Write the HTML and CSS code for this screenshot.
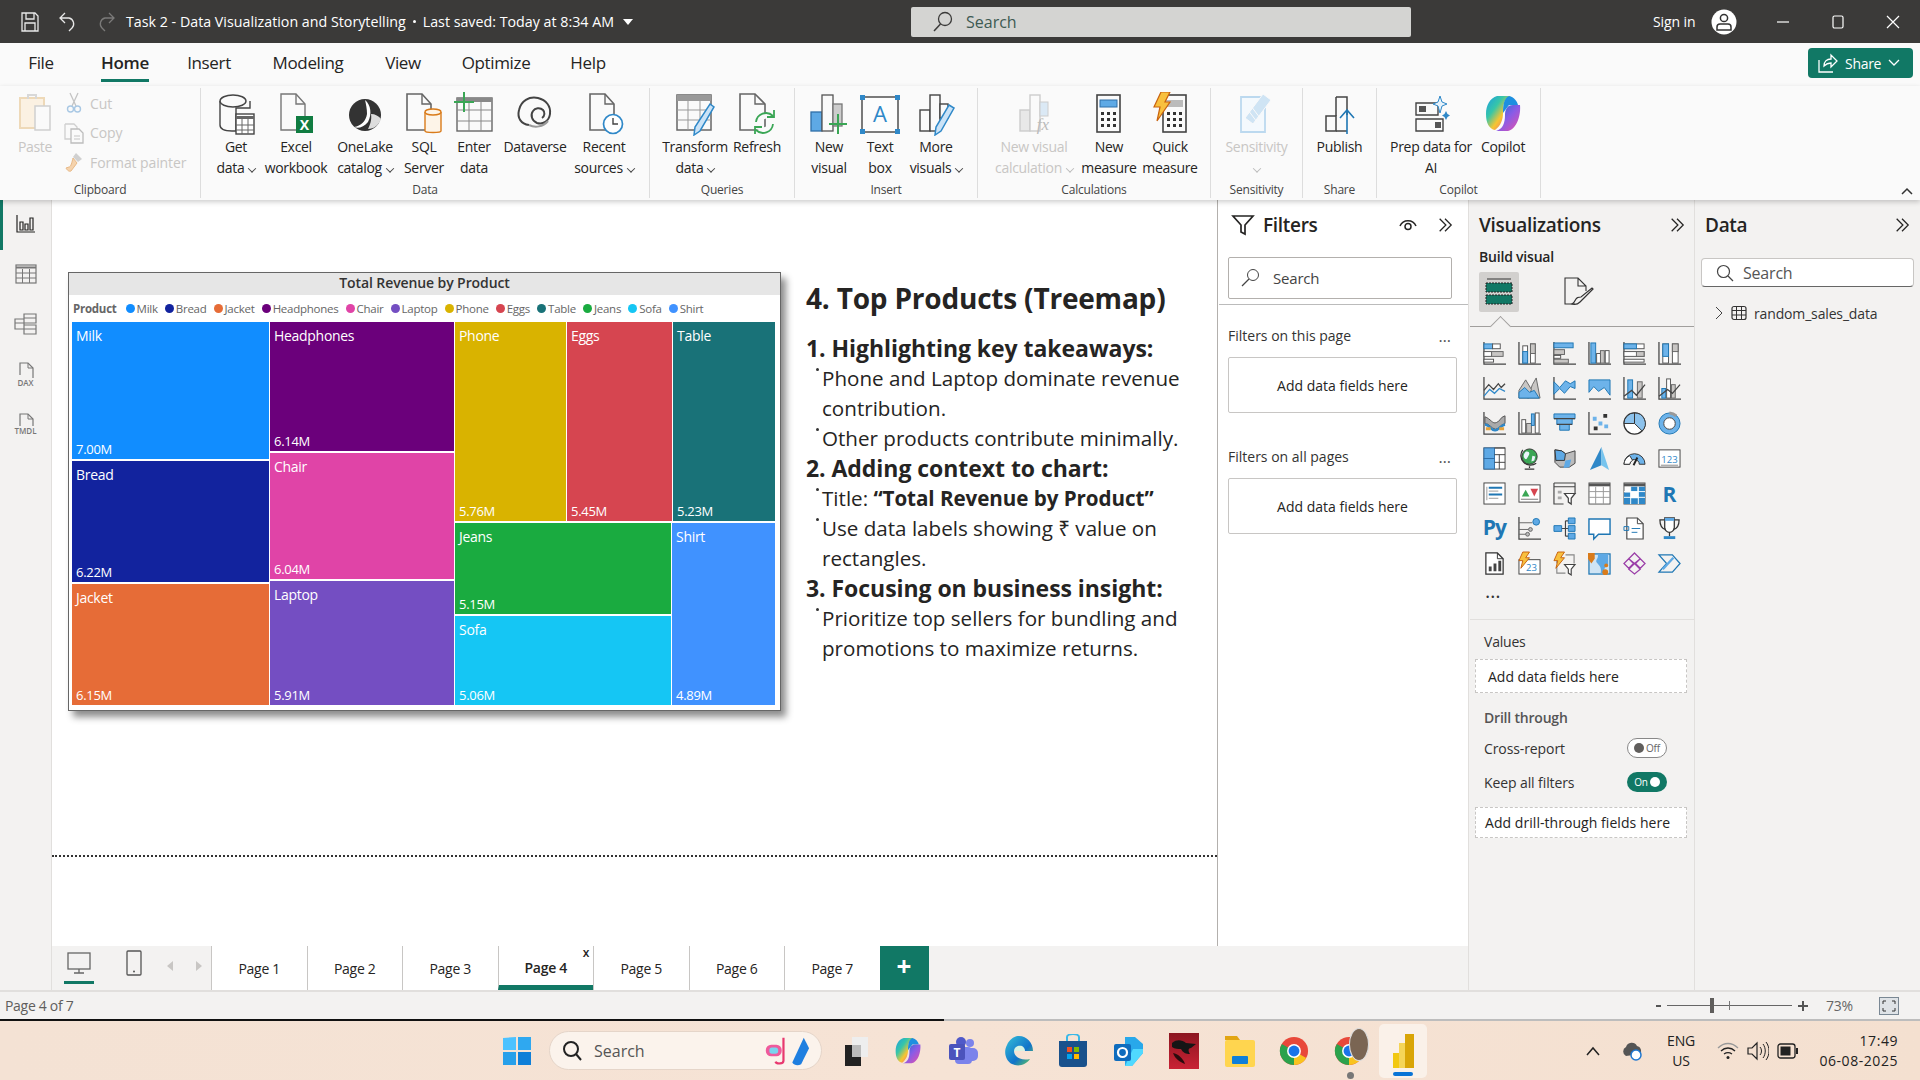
FILE: index.html
```html
<!DOCTYPE html>
<html lang="en">
<head>
<meta charset="utf-8">
<title>Task 2 - Data Visualization and Storytelling</title>
<link rel="stylesheet" href="styles.css">
</head>
<body>
<svg class="defs" aria-hidden="true">
  <defs>
    <linearGradient id="cop" x1="0" y1="0" x2="1" y2="1"><stop offset="0" stop-color="#1b9de2"/><stop offset=".35" stop-color="#37c6a8"/><stop offset=".6" stop-color="#f7c531"/><stop offset="1" stop-color="#ee4c8e"/></linearGradient>
    <linearGradient id="cop2" x1="0" y1="0" x2="1" y2="1"><stop offset="0" stop-color="#1570d6"/><stop offset=".5" stop-color="#8a5ce6"/><stop offset="1" stop-color="#e94fa8"/></linearGradient>
    <linearGradient id="edge" x1="0" y1="0" x2="1" y2="1"><stop offset="0" stop-color="#35c1d9"/><stop offset=".6" stop-color="#1173c9"/><stop offset="1" stop-color="#6bd24f"/></linearGradient>
    <linearGradient id="drag" x1="0" y1="0" x2="0" y2="1"><stop offset="0" stop-color="#8c1620"/><stop offset="1" stop-color="#c92235"/></linearGradient>
    <symbol id="dbl" viewBox="0 0 18 18"><path d="M3 2l7 7-7 7M9 2l7 7-7 7" fill="none" stroke="#252423" stroke-width="1.4"/></symbol>
    <symbol id="chrome" viewBox="0 0 32 32"><circle cx="16" cy="16" r="15" fill="#e8483a"/><path d="M16 16L29 23.5A15 15 0 0 1 16 31z" fill="#f9c31e"/><path d="M16 16L16 31A15 15 0 0 1 3 8.5z" fill="#2ba24c"/><circle cx="16" cy="16" r="7.4" fill="#fff"/><circle cx="16" cy="16" r="5.8" fill="#1a73e8"/></symbol>
  </defs>
</svg>

<header class="titlebar">
  <div class="tb-left">
    <svg class="tb-ic" width="20" height="22" viewBox="0 0 20 22"><path d="M2 2h13l3 3v15H2z M6 2v6h8V2 M5 20v-8h10v8" fill="none" stroke="#e8e8e8" stroke-width="1.3"/></svg>
    <svg class="tb-ic" width="20" height="22" viewBox="0 0 20 22"><path d="M7 2L2 7l5 5M2 7h9a6 6 0 0 1 3 10l-3 3" fill="none" stroke="#e8e8e8" stroke-width="1.3"/></svg>
    <svg class="tb-ic tb-redo" width="20" height="22" viewBox="0 0 20 22"><path d="M13 2l5 5-5 5M18 7H9a6 6 0 0 0-3 10l3 3" fill="none" stroke="#7b7a79" stroke-width="1.3"/></svg>
    <span class="doc-title">Task 2 - Data Visualization and Storytelling</span>
    <span class="doc-dot"></span>
    <span class="doc-title">Last saved: Today at 8:34 AM</span>
    <span class="doc-caret"></span>
  </div>
  <div class="tb-search">
    <svg width="22" height="24" viewBox="0 0 22 24"><circle cx="13" cy="9" r="6.5" fill="none" stroke="#3b3a39" stroke-width="1.3"/><path d="M8.5 14L2 21" stroke="#3b3a39" stroke-width="1.5"/></svg>
    <span>Search</span>
  </div>
  <div class="tb-right">
    <span class="signin">Sign in</span>
    <svg class="avatar" width="26" height="26" viewBox="0 0 26 26"><circle cx="13" cy="13" r="12.5" fill="#fff"/><circle cx="13" cy="9" r="3.6" fill="none" stroke="#333" stroke-width="1.5"/><path d="M6 21v-3a3 3 0 0 1 3-3h8a3 3 0 0 1 3 3v3z" fill="none" stroke="#333" stroke-width="1.5"/></svg>
    <svg class="win-btn" width="14" height="14" viewBox="0 0 14 14"><path d="M1 7h12" stroke="#fff" stroke-width="1.2"/></svg>
    <svg class="win-btn" width="14" height="14" viewBox="0 0 14 14"><rect x="2" y="1" width="10" height="12" rx="1.5" fill="none" stroke="#fff" stroke-width="1.2"/></svg>
    <svg class="win-btn" width="14" height="14" viewBox="0 0 14 14"><path d="M1 1l12 12M13 1L1 13" stroke="#fff" stroke-width="1.2"/></svg>
  </div>
</header>

<nav class="tabsrow">
  <div class="rtabs">
    <span class="rtab t-file">File</span>
    <span class="rtab t-home active">Home</span>
    <span class="rtab t-ins">Insert</span>
    <span class="rtab t-mod">Modeling</span>
    <span class="rtab t-view">View</span>
    <span class="rtab t-opt">Optimize</span>
    <span class="rtab t-help">Help</span>
  </div>
  <button class="share">
    <svg width="22" height="22" viewBox="0 0 22 22"><path d="M3 8v12h14M8 14c0-5 3-7 7-7V3l6 6-6 6v-4c-3 0-5 1-7 3z" fill="none" stroke="#fff" stroke-width="1.3"/></svg>
    <span>Share</span>
    <svg width="12" height="8" viewBox="0 0 12 8"><path d="M1 1l5 5 5-5" fill="none" stroke="#fff" stroke-width="1.3"/></svg>
  </button>
</nav>

<section class="ribbon">
  <div class="rgroup g-clip">
    <div class="rbody clipbody">
      <div class="rbtn dis paste">
        <div class="ric"><svg width="40" height="40" viewBox="0 0 40 40"><path d="M5 6h24v30H5z" fill="#fbf1e2" stroke="#eed9b8" stroke-width="2"/><path d="M13 7V3h8v4" fill="none" stroke="#d8d8d8" stroke-width="2"/><rect x="20" y="14" width="15" height="24" fill="#fafafa" stroke="#cfcfcf" stroke-width="1.5"/></svg></div>
        <div class="rtxt">Paste</div>
      </div>
      <div class="clipcol">
        <div class="clipitem"><svg width="20" height="22" viewBox="-2 0 20 22"><path d="M4 1l6 13M12 1L6 14" stroke="#c4c4c4" stroke-width="1.3"/><circle cx="4.5" cy="17" r="3" fill="none" stroke="#a9c8e4" stroke-width="1.4"/><circle cx="11.5" cy="17" r="3" fill="none" stroke="#a9c8e4" stroke-width="1.4"/></svg><span>Cut</span></div>
        <div class="clipitem"><svg width="20" height="22" viewBox="0 0 20 22"><path d="M1 2h9l3 3v3M1 2v15h6" fill="none" stroke="#cfcfcf" stroke-width="1.3"/><path d="M7 7h8l4 4v10H7z" fill="#fafafa" stroke="#bdbdbd" stroke-width="1.3"/><path d="M10 14h6M10 17h6" stroke="#c4c4c4"/></svg><span>Copy</span></div>
        <div class="clipitem"><svg width="20" height="22" viewBox="0 0 20 22"><path d="M12 2l6 6-4 3-5-5z" fill="#d0d0d0"/><path d="M9 7l4 5-6 8c-2 1-4-1-5-3l3-1c2 0 3-5 4-9z" fill="#f5d3ad" stroke="#e8b987"/></svg><span>Format painter</span></div>
      </div>
    </div>
    <div class="rlabel">Clipboard</div>
  </div>

  <div class="rgroup g-data">
    <div class="rbody">
      <div class="rbtn"><div class="ric"><svg width="40" height="44" viewBox="0 0 40 44"><path d="M4 9v24c0 4 5 6 12 6h4V16h14V9" fill="#fafafa" stroke="#444" stroke-width="1.4"/><ellipse cx="17" cy="9" rx="13" ry="6" fill="#fafafa" stroke="#444" stroke-width="1.4"/><rect x="20" y="22" width="18" height="20" fill="#fff" stroke="#444" stroke-width="1.4"/><path d="M20 24h18v3H20z" fill="#666"/><path d="M20 33h18M20 38h18M26 27v15M32 27v15" stroke="#666"/></svg></div><div class="rtxt">Get<br>data<i class="chev"></i></div></div>
      <div class="rbtn"><div class="ric"><svg width="40" height="44" viewBox="0 0 40 44"><path d="M5 2h15l9 10v26H5z" fill="#fafafa" stroke="#777" stroke-width="1.4"/><path d="M20 2v10h9" fill="none" stroke="#777" stroke-width="1.4"/><rect x="20" y="24" width="17" height="17" fill="#107c41"/><text x="28.5" y="37.5" class="xl">X</text></svg></div><div class="rtxt">Excel<br>workbook</div></div>
      <div class="rbtn"><div class="ric"><svg width="40" height="44" viewBox="0 0 40 44"><circle cx="20" cy="23" r="16" fill="#333"/><path d="M20 8c6 5 7 14 3 22-4 5-10 7-14 5 7-1 12-6 13-13 0-5-1-10-2-14z" fill="#fff"/><path d="M26 22c4 0 8 2 10 5-2 6-7 10-13 10 2-4 4-9 3-15z" fill="#ddd"/></svg></div><div class="rtxt">OneLake<br>catalog<i class="chev"></i></div></div>
      <div class="rbtn"><div class="ric"><svg width="40" height="44" viewBox="0 0 40 44"><path d="M3 2h15l9 10v26H3z" fill="#fafafa" stroke="#666" stroke-width="1.6"/><path d="M18 2v10h9" fill="none" stroke="#666" stroke-width="1.4"/><path d="M21 20v19c0 2 16 2 16 0V20" fill="#fdf4e8" stroke="#d97b1a" stroke-width="1.4"/><ellipse cx="29" cy="20" rx="8" ry="3" fill="#fdf4e8" stroke="#d97b1a" stroke-width="1.4"/></svg></div><div class="rtxt">SQL<br>Server</div></div>
      <div class="rbtn"><div class="ric"><svg width="40" height="44" viewBox="0 0 40 44"><rect x="3" y="6" width="35" height="33" fill="#fafafa" stroke="#666" stroke-width="1.4"/><path d="M3 6h35v4H3z" fill="#888"/><path d="M3 18h35M3 29h35M15 10v29M27 10v29" stroke="#888"/><path d="M10 0v20M0 10h20" stroke="#3aa655" stroke-width="2"/></svg></div><div class="rtxt">Enter<br>data</div></div>
      <div class="rbtn"><div class="ric"><svg width="40" height="40" viewBox="0 0 40 40"><path d="M14 33C6 32 2 26 4 18 6 9 14 4 23 6c8 2 13 8 12 16-1 7-7 11-13 9-5-2-7-8-4-12 2-3 7-4 10-1 2 2 2 6-1 8" fill="none" stroke="#444" stroke-width="2"/><path d="M14 33c6 3 14 2 19-4" fill="none" stroke="#999" stroke-width="2"/></svg></div><div class="rtxt">Dataverse</div></div>
      <div class="rbtn"><div class="ric"><svg width="40" height="44" viewBox="0 0 40 44"><path d="M6 2h15l9 10v26H6z" fill="#fafafa" stroke="#666" stroke-width="1.6"/><path d="M21 2v10h9" fill="none" stroke="#666" stroke-width="1.4"/><circle cx="29" cy="32" r="9.5" fill="#fff" stroke="#2f88c8" stroke-width="1.7"/><path d="M29 26v6h5" fill="none" stroke="#444" stroke-width="1.4"/></svg></div><div class="rtxt">Recent<br>sources<i class="chev"></i></div></div>
    </div>
    <div class="rlabel">Data</div>
  </div>

  <div class="rgroup g-query">
    <div class="rbody">
      <div class="rbtn"><div class="ric"><svg width="42" height="44" viewBox="0 0 42 44"><rect x="3" y="3" width="34" height="35" fill="#fafafa" stroke="#666" stroke-width="1.5"/><path d="M3 3h34v6H3z" fill="#999"/><path d="M3 18h34M3 28h34M14 9v29M26 9v29" stroke="#999"/><path d="M36 12l4 3-14 24-6 4 1-8z" fill="#cbe3f7" stroke="#2f88c8" stroke-width="1.5"/></svg></div><div class="rtxt">Transform<br>data<i class="chev"></i></div></div>
      <div class="rbtn"><div class="ric"><svg width="40" height="44" viewBox="0 0 40 44"><path d="M3 2h15l10 10v26H3z" fill="#fafafa" stroke="#666" stroke-width="1.6"/><path d="M18 2v10h10" fill="none" stroke="#666" stroke-width="1.4"/><path d="M19 30a10 10 0 0 1 17-6M36 32a10 10 0 0 1-17 6" fill="#fafafa" stroke="#3aa655" stroke-width="1.8"/><path d="M37 18v7h-7M18 42v-7h7" fill="none" stroke="#3aa655" stroke-width="1.8"/></svg></div><div class="rtxt">Refresh</div></div>
    </div>
    <div class="rlabel">Queries</div>
  </div>

  <div class="rgroup g-insert">
    <div class="rbody">
      <div class="rbtn"><div class="ric"><svg width="40" height="44" viewBox="0 0 40 44"><rect x="2" y="20" width="11" height="19" fill="#5ea9e5" stroke="#2f6fa8" stroke-width="1.3"/><rect x="13" y="3" width="11" height="36" fill="#fafafa" stroke="#555" stroke-width="1.3"/><rect x="24" y="12" width="9" height="22" fill="#ccc" stroke="#777" stroke-width="1.3"/><path d="M29 22v20M20 32h18" stroke="#3aa655" stroke-width="2"/></svg></div><div class="rtxt">New<br>visual</div></div>
      <div class="rbtn"><div class="ric"><svg width="40" height="44" viewBox="0 0 40 44"><rect x="2" y="5" width="36" height="35" fill="#fdfdfd" stroke="#444" stroke-width="1.4"/><g fill="#2f88c8"><rect x="0" y="3" width="5" height="5"/><rect x="35" y="3" width="5" height="5"/><rect x="0" y="37" width="5" height="5"/><rect x="35" y="37" width="5" height="5"/></g><text x="20" y="30" class="tbA">A</text></svg></div><div class="rtxt">Text<br>box</div></div>
      <div class="rbtn"><div class="ric"><svg width="40" height="44" viewBox="0 0 40 44"><rect x="4" y="18" width="10" height="21" fill="#fafafa" stroke="#444" stroke-width="1.4"/><rect x="14" y="3" width="10" height="36" fill="#fafafa" stroke="#444" stroke-width="1.4"/><rect x="24" y="12" width="8" height="14" fill="#fafafa" stroke="#444" stroke-width="1.4"/><path d="M33 13l5 3-13 23-6 4 1-8z" fill="#cbe3f7" stroke="#2f88c8" stroke-width="1.5"/></svg></div><div class="rtxt">More<br>visuals<i class="chev"></i></div></div>
    </div>
    <div class="rlabel">Insert</div>
  </div>

  <div class="rgroup g-calc">
    <div class="rbody">
      <div class="rbtn dis"><div class="ric"><svg width="40" height="44" viewBox="0 0 40 44"><rect x="6" y="18" width="10" height="21" fill="#e8e8e8" stroke="#ccc" stroke-width="1.4"/><rect x="16" y="3" width="10" height="36" fill="#fafafa" stroke="#ccc" stroke-width="1.4"/><rect x="26" y="10" width="8" height="14" fill="#dbe9f5" stroke="#ccc"/><text x="29" y="38" class="fx">fx</text></svg></div><div class="rtxt">New visual<br>calculation<i class="chev"></i></div></div>
      <div class="rbtn"><div class="ric"><svg width="40" height="44" viewBox="0 0 40 44"><rect x="8" y="3" width="23" height="37" fill="#fafafa" stroke="#444" stroke-width="1.6"/><rect x="11" y="8" width="17" height="7" fill="#5ea9e5" stroke="#2f6fa8"/><path d="M12 20h3v3h-3zM18 20h3v3h-3zM24 20h3v3h-3zM12 26h3v3h-3zM18 26h3v3h-3zM24 26h3v3h-3zM12 32h3v3h-3zM18 32h3v3h-3zM24 32h3v3h-3z" fill="#333"/></svg></div><div class="rtxt">New<br>measure</div></div>
      <div class="rbtn"><div class="ric"><svg width="40" height="44" viewBox="0 0 40 44"><rect x="13" y="3" width="23" height="37" fill="#fafafa" stroke="#444" stroke-width="1.6"/><rect x="16" y="8" width="17" height="7" fill="#bbb"/><path d="M17 20h3v3h-3zM23 20h3v3h-3zM29 20h3v3h-3zM17 26h3v3h-3zM23 26h3v3h-3zM29 26h3v3h-3zM17 32h3v3h-3zM23 32h3v3h-3zM29 32h3v3h-3z" fill="#333"/><path d="M11 0h9l-5 10h5L7 29l3-14H4z" fill="#f8c03e" stroke="#c9620f" stroke-width="1.2"/></svg></div><div class="rtxt">Quick<br>measure</div></div>
    </div>
    <div class="rlabel">Calculations</div>
  </div>

  <div class="rgroup g-sens">
    <div class="rbody">
      <div class="rbtn dis"><div class="ric"><svg width="40" height="44" viewBox="0 0 40 44"><path d="M4 5h24v35H4z" fill="#f4f9fd" stroke="#bcd9ef" stroke-width="1.8"/><path d="M26 2l8 6-18 24-8-6z" fill="#cfe4f4" stroke="#fafafa"/><path d="M11 18l9 12M14 14l9 12" stroke="#fafafa"/></svg></div><div class="rtxt">Sensitivity<br><i class="chev solo"></i></div></div>
    </div>
    <div class="rlabel">Sensitivity</div>
  </div>

  <div class="rgroup g-share">
    <div class="rbody">
      <div class="rbtn"><div class="ric"><svg width="40" height="44" viewBox="0 0 40 44"><path d="M6 24h10v15H6z M16 5h11v18" fill="#fafafa" stroke="#444" stroke-width="1.5"/><path d="M16 24V5M16 39h11" fill="none" stroke="#444" stroke-width="1.5"/><path d="M27 42V19M20 26l7-8 7 8" fill="none" stroke="#1f77b4" stroke-width="1.6"/></svg></div><div class="rtxt">Publish</div></div>
    </div>
    <div class="rlabel">Share</div>
  </div>

  <div class="rgroup g-cop">
    <div class="rbody">
      <div class="rbtn"><div class="ric"><svg width="40" height="44" viewBox="0 0 40 44"><path d="M5 11h22v12H5z M5 27h27v12H5z" fill="#fafafa" stroke="#444" stroke-width="1.4"/><rect x="8" y="14" width="7" height="6" fill="#555"/><rect x="24" y="30" width="6" height="6" fill="#555"/><path d="M29 4l2 6 5 2-5 2-2 7-2-7-5-2 5-2z" fill="#e6f2fb" stroke="#2f88c8"/><path d="M35 19l1.5 3 2.500 1.500-2.500 1.500-1.500 3-1.500-3-2.500-1.500 2.500-1.500z" fill="#2f88c8"/></svg></div><div class="rtxt">Prep data for<br>AI</div></div>
      <div class="rbtn"><div class="ric"><svg width="40" height="44" viewBox="0 0 40 44"><path d="M14 4h14c-7 2-8 9-8 17 0 6-2 13-8 17-6-1-9-7-9-16C3 13 7 6 14 4z" fill="url(#cop)"/><path d="M26 4c5 1 8 5 9 9H26l-6 8c0-8 1-15 6-17z" fill="#1d8fe0"/><path d="M37 13c1 10-3 24-12 26H13c7-2 9-8 9-16 0-5 2-10 8-10z" fill="url(#cop2)"/></svg></div><div class="rtxt">Copilot</div></div>
    </div>
    <div class="rlabel">Copilot</div>
  </div>
  <svg class="collapse" width="12" height="8" viewBox="0 0 12 8"><path d="M1 7l5-5 5 5" fill="none" stroke="#333" stroke-width="1.5"/></svg>
</section>

<main class="workspace">
  <aside class="rail">
    <div class="rail-ic on"><svg width="20" height="20" viewBox="0 0 20 20"><path d="M1 1v17h18" fill="none" stroke="#252423" stroke-width="1.2"/><path d="M4 8h3v8H4zM9 10h3v6H9zM14 4h3v12h-3z" fill="none" stroke="#252423" stroke-width="1.2"/></svg></div>
    <div class="rail-ic"><svg width="22" height="20" viewBox="0 0 22 20"><rect x="1" y="1" width="20" height="18" fill="none" stroke="#777" stroke-width="1.2"/><path d="M1 3.500h20" stroke="#777" stroke-width="2"/><path d="M1 9h20M1 14h20M7.500 5v14M14.500 5v14" stroke="#777"/></svg></div>
    <div class="rail-ic"><svg width="24" height="24" viewBox="0 0 24 24"><path d="M10 2h12v9H10zM10 13h12v9H10zM1 7h9v10H1z" fill="none" stroke="#777" stroke-width="1.2"/><path d="M10 6h12M10 17h12M1 11h9" stroke="#777"/></svg></div>
    <div class="rail-ic col"><svg width="22" height="16" viewBox="0 0 22 16"><path d="M5 13V1h8l5 5v10" fill="none" stroke="#777" stroke-width="1.2"/><path d="M13 1v5h5" fill="none" stroke="#777"/></svg><span>DAX</span></div>
    <div class="rail-ic col"><svg width="22" height="13" viewBox="0 0 22 13"><path d="M5 13V1h8l5 5v7" fill="none" stroke="#777" stroke-width="1.2"/><path d="M13 1v5h5" fill="none" stroke="#777"/></svg><span>TMDL</span></div>
  </aside>

  <div class="center">
    <div class="stage">
      <div class="canvas-wrap">
        <div class="page">
          <article class="visual">
            <div class="v-title">Total Revenue by Product</div>
            <div class="legend">
              <b>Product</b>
              <span class="lg"><i class="c-milk"></i>Milk</span>
              <span class="lg"><i class="c-bread"></i>Bread</span>
              <span class="lg"><i class="c-jacket"></i>Jacket</span>
              <span class="lg"><i class="c-head"></i>Headphones</span>
              <span class="lg"><i class="c-chair"></i>Chair</span>
              <span class="lg"><i class="c-laptop"></i>Laptop</span>
              <span class="lg"><i class="c-phone"></i>Phone</span>
              <span class="lg"><i class="c-eggs"></i>Eggs</span>
              <span class="lg"><i class="c-table"></i>Table</span>
              <span class="lg"><i class="c-jeans"></i>Jeans</span>
              <span class="lg"><i class="c-sofa"></i>Sofa</span>
              <span class="lg"><i class="c-shirt"></i>Shirt</span>
            </div>
            <div class="treemap">
              <div class="tm-col w1">
                <div class="cell c-milk h-milk"><span>Milk</span><small>7.00M</small></div>
                <div class="cell c-bread h-bread"><span>Bread</span><small>6.22M</small></div>
                <div class="cell c-jacket h-jacket"><span>Jacket</span><small>6.15M</small></div>
              </div>
              <div class="tm-col w2">
                <div class="cell c-head h-head"><span>Headphones</span><small>6.14M</small></div>
                <div class="cell c-chair h-chair"><span>Chair</span><small>6.04M</small></div>
                <div class="cell c-laptop h-laptop"><span>Laptop</span><small>5.91M</small></div>
              </div>
              <div class="tm-col w3">
                <div class="tm-row top">
                  <div class="cell c-phone w-phone"><span>Phone</span><small>5.76M</small></div>
                  <div class="cell c-eggs w-eggs"><span>Eggs</span><small>5.45M</small></div>
                  <div class="cell c-table w-table"><span>Table</span><small>5.23M</small></div>
                </div>
                <div class="tm-row bottom">
                  <div class="tm-col w-jeans">
                    <div class="cell c-jeans h-jeans"><span>Jeans</span><small>5.15M</small></div>
                    <div class="cell c-sofa h-sofa"><span>Sofa</span><small>5.06M</small></div>
                  </div>
                  <div class="cell c-shirt w-shirt"><span>Shirt</span><small>4.89M</small></div>
                </div>
              </div>
            </div>
          </article>
          <article class="notes">
            <h1>4. Top Products (Treemap)</h1>
            <h2>1. Highlighting key takeaways:</h2>
            <ul>
              <li>Phone and Laptop dominate revenue contribution.</li>
              <li>Other products contribute minimally.</li>
            </ul>
            <h2>2. Adding context to chart:</h2>
            <ul>
              <li>Title: <b>“Total Revenue by Product”</b></li>
              <li>Use data labels showing ₹ value on rectangles.</li>
            </ul>
            <h2>3. Focusing on business insight:</h2>
            <ul>
              <li>Prioritize top sellers for bundling and promotions to maximize returns.</li>
            </ul>
          </article>
        </div>
      </div>
      <aside class="filters">
        <div class="f-head">
          <svg width="24" height="22" viewBox="0 0 24 22"><path d="M2 2h20l-8 9v9l-4-2v-7z" fill="none" stroke="#252423" stroke-width="1.7"/></svg>
          <span class="pane-title">Filters</span>
          <svg class="eye" width="18" height="12" viewBox="0 0 18 12"><path d="M1 7c3-7 13-7 16 0" fill="none" stroke="#252423" stroke-width="1.5"/><circle cx="9" cy="7.500" r="3" fill="none" stroke="#252423" stroke-width="1.5"/></svg>
          <svg class="dbl" width="16" height="16"><use href="#dbl"/></svg>
        </div>
        <div class="f-search">
          <svg width="20" height="20" viewBox="0 0 20 20"><circle cx="12" cy="7" r="5.500" fill="none" stroke="#444"/><path d="M8 11l-7 7" stroke="#444" stroke-width="1.200"/></svg>
          <span>Search</span>
        </div>
        <div class="f-rule"></div>
        <div class="f-sec"><span>Filters on this page</span><em>…</em></div>
        <div class="f-box">Add data fields here</div>
        <div class="f-sec s2"><span>Filters on all pages</span><em>…</em></div>
        <div class="f-box">Add data fields here</div>
      </aside>
    </div>
    <div class="pagebar">
      <div class="devices">
        <div class="dev on"><svg width="24" height="24" viewBox="0 0 24 24"><rect x="1" y="2" width="22" height="16" fill="none" stroke="#666" stroke-width="1.300"/><path d="M12 18v4M7 22h10" stroke="#666" stroke-width="1.300"/></svg></div>
        <div class="dev"><svg width="16" height="26" viewBox="0 0 16 26"><rect x="1" y="1" width="14" height="24" rx="1" fill="none" stroke="#555" stroke-width="1.300"/><circle cx="8" cy="21.500" r="1" fill="#555"/></svg></div>
        <span class="arr l"></span>
        <span class="arr r"></span>
      </div>
      <div class="ptab">Page 1</div>
      <div class="ptab">Page 2</div>
      <div class="ptab">Page 3</div>
      <div class="ptab cur">Page 4<span class="px">x</span></div>
      <div class="ptab">Page 5</div>
      <div class="ptab">Page 6</div>
      <div class="ptab">Page 7</div>
      <div class="padd">+</div>
    </div>
  </div>

  <aside class="viz">
    <div class="v-head"><span class="pane-title">Visualizations</span><svg class="dbl" width="16" height="16"><use href="#dbl"/></svg></div>
    <div class="v-sub">Build visual</div>
    <div class="v-modes">
      <div class="mode sel"><svg width="32" height="32" viewBox="0 0 32 32"><path d="M4 3h24" stroke="#333"/><rect x="3" y="7" width="26" height="9" fill="#117865" stroke="#222" stroke-dasharray="2 1"/><rect x="3" y="19" width="26" height="9" fill="#117865" stroke="#222" stroke-dasharray="2 1"/></svg></div>
      <div class="mode"><svg width="32" height="32" viewBox="0 0 32 32"><path d="M12 28H2V2h13l8 8v5M15 2v8h8" fill="none" stroke="#333" stroke-width="1.100"/><path d="M30 13L17 26c-2 2-5 3-8 2 2-1 3-3 4-5s3-2 5-2l11-9z" fill="none" stroke="#333" stroke-width="1.200"/></svg></div>
    </div>
    <div class="v-notch"></div>
    <div class="v-grid">
      <svg class="vi" viewBox="0 0 24 24"><path class="k" d="M1 0v23h23"/><rect class="b" x="1" y="2" width="9" height="5"/><rect class="n" x="10" y="2" width="8" height="5"/><rect class="n" x="1" y="10" width="8" height="5"/><rect class="g" x="9" y="10" width="12" height="5"/><rect class="n" x="1" y="18" width="10" height="3"/></svg>
      <svg class="vi" viewBox="0 0 24 24"><path class="k" d="M1 0v23h23"/><rect class="n" x="5" y="4" width="5" height="18"/><rect class="b" x="5" y="10" width="5" height="12"/><rect class="n" x="13" y="2" width="5" height="20"/><rect class="g" x="13" y="2" width="5" height="10"/></svg>
      <svg class="vi" viewBox="0 0 24 24"><path class="k" d="M1 0v23h23"/><rect class="b" x="1" y="1" width="20" height="5"/><rect class="g" x="1" y="8" width="11" height="5"/><rect class="n" x="1" y="14" width="7" height="3"/><rect class="g" x="1" y="18" width="15" height="4"/></svg>
      <svg class="vi" viewBox="0 0 24 24"><path class="k" d="M1 0v23h23"/><rect class="b" x="3" y="1" width="5" height="21"/><rect class="n" x="9" y="12" width="4" height="10"/><rect class="g" x="13" y="9" width="4" height="13"/><rect class="n" x="18" y="9" width="4" height="13"/></svg>
      <svg class="vi" viewBox="0 0 24 24"><path class="k" d="M1 0v23h23"/><rect class="n" x="1" y="2" width="21" height="5"/><rect class="b" x="1" y="2" width="13" height="5"/><rect class="n" x="1" y="10" width="21" height="5"/><rect class="g" x="14" y="10" width="8" height="5"/><rect class="n" x="1" y="18" width="21" height="3"/></svg>
      <svg class="vi" viewBox="0 0 24 24"><path class="k" d="M1 0v23h23"/><rect class="n" x="5" y="2" width="6" height="20"/><rect class="b" x="5" y="2" width="6" height="13"/><rect class="n" x="15" y="2" width="6" height="20"/><rect class="g" x="15" y="2" width="6" height="8"/></svg>

      <svg class="vi" viewBox="0 0 24 24"><path class="k" d="M1 0v23h23"/><path class="k" d="M1 14l5-6 5 5 5-6 3 4 4-4"/><path class="bl" d="M1 20l6-7 5 4 5-5 6 3"/></svg>
      <svg class="vi" viewBox="0 0 24 24"><path class="g" d="M10 22l5-14 4-7 4 21z"/><path class="g" d="M1 22V14L8 3l6 10-3 9z"/><path class="b" d="M1 22v-6l6-5 5 5 5-2 5 8z"/></svg>
      <svg class="vi" viewBox="0 0 24 24"><path class="k" d="M1 0v23h23"/><path class="b" d="M1 5l6 6 6-7 5 3 5-3v8l-5-2-6 7-5-5-6 6z"/></svg>
      <svg class="vi" viewBox="0 0 24 24"><path class="k" d="M1 23h23"/><path class="b" d="M1 3h22v16l-6-8-6 4-5-5-5 6z"/></svg>
      <svg class="vi" viewBox="0 0 24 24"><path class="k" d="M1 0v23h23"/><rect class="b" x="5" y="3" width="5" height="19"/><rect class="g" x="15" y="5" width="5" height="17"/><path class="k" d="M1 20l8-6 5 5 9-11"/></svg>
      <svg class="vi" viewBox="0 0 24 24"><path class="k" d="M1 0v23h23"/><rect class="b" x="4" y="12" width="4" height="10"/><rect class="n" x="9" y="2" width="4" height="20"/><rect class="g" x="14" y="8" width="4" height="14"/><path class="k" d="M1 20l9-7 5 4 8-9"/></svg>

      <svg class="vi" viewBox="0 0 24 24"><path class="k" d="M1 0v23h23"/><path d="M2 5c6 2 8 8 12 6 4-1 4-6 9-7v8c-5 1-6 6-10 6-5-1-6-6-11-6z" fill="#aaa" stroke="#555"/><path d="M2 13c5 0 6 7 11 6 4 0 5-5 10-6" fill="none" stroke="#2f88c8" stroke-width="2.500"/><path d="M3 16h5v3H3zM17 16h5v3h-5z" fill="#e6a23c"/></svg>
      <svg class="vi" viewBox="0 0 24 24"><path class="k" d="M1 0v23h23"/><rect class="n" x="4" y="8" width="4" height="14"/><rect class="g" x="9" y="12" width="5" height="10"/><rect class="b" x="14" y="2" width="3" height="12"/><rect class="n" x="18" y="1" width="4" height="21"/></svg>
      <svg class="vi" viewBox="0 0 24 24"><path class="b" d="M1 2h22v5h-3v6h-3v6H7v-6H4V7H1z"/><path class="k" d="M1 7h22M4 13h16"/></svg>
      <svg class="vi" viewBox="0 0 24 24"><path class="k" d="M1 0v23h23"/><path d="M5 5h4v4H5z M11 10h4v4h-4z M17 13h4v4h-4z" fill="#6db3ea"/><path d="M16 2h4v4h-4zM6 15h4v4H6z" fill="#333"/></svg>
      <svg class="vi" viewBox="0 0 24 24"><circle cx="12" cy="12" r="11" fill="#fff" stroke="#333" stroke-width="1.300"/><path d="M12 12V1a11 11 0 0 1 8 18.800z" fill="#8cc2ec" stroke="#333"/><path d="M12 12H1a11 11 0 0 1 11-11z" fill="#8cc2ec" stroke="#333"/></svg>
      <svg class="vi" viewBox="0 0 24 24"><circle cx="12" cy="12" r="8.500" fill="none" stroke="#6db3ea" stroke-width="5"/><circle cx="12" cy="12" r="11" fill="none" stroke="#1f77b4"/><circle cx="12" cy="12" r="6" fill="#fff" stroke="#444"/><path d="M12 1a11 11 0 0 1 7 3" stroke="#999" stroke-width="3" fill="none"/></svg>

      <svg class="vi" viewBox="0 0 24 24"><rect x="1" y="1" width="22" height="22" fill="#fff" stroke="#444"/><rect x="1" y="1" width="11" height="11" fill="#5ea9e5" stroke="#2f6fa8"/><rect x="1" y="12" width="11" height="11" fill="#5ea9e5" stroke="#2f6fa8"/><path d="M12 1h11M12 8h11M17 8v15M12 16h11" stroke="#444" fill="none"/></svg>
      <svg class="vi" viewBox="0 0 24 24"><circle cx="12" cy="10" r="8" fill="#3aa655" stroke="#333"/><path d="M8 5c3-1 5 1 3 4s-2 5-4 3-1-5 1-7zM15 9l3 1-1 4-3 1z" fill="#eaf4fb"/><path d="M5 3a10 10 0 0 0 14 14M12 20v2M7 23h10" fill="none" stroke="#333" stroke-width="1.300"/></svg>
      <svg class="vi" viewBox="0 0 24 24"><path d="M2 3l7 1 4 3 10-3v13l-6 4H7l-5-5z" fill="#bbb" stroke="#444"/><path d="M2 3l7 1 4 3-1 7H3z" fill="#5ea9e5" stroke="#333"/><path d="M13 14l6-1-2 8-6 1z" fill="#5ea9e5"/></svg>
      <svg class="vi" viewBox="0 0 24 24"><path d="M14 0v19l-12 5z" fill="#2f88c8"/><path d="M14 0l8 24-8-5z" fill="#76c4ee"/></svg>
      <svg class="vi" viewBox="0 0 24 24"><path d="M1 18a11 11 0 0 1 22 0h-6a5 5 0 0 0-10 0z" fill="#6db3ea" stroke="#333"/><path d="M1 18a11 11 0 0 1 6-9l3 5a5 5 0 0 0-3 4z" fill="#fff" stroke="#333"/><path d="M15 11l-4 8" stroke="#222" stroke-width="2"/></svg>
      <svg class="vi" viewBox="0 0 24 24"><rect x="1" y="3" width="22" height="18" fill="#fff" stroke="#444"/><text x="12" y="16.500" class="n123">123</text><path d="M3 19h18" stroke="#888"/></svg>

      <svg class="vi" viewBox="0 0 24 24"><rect x="1" y="1" width="22" height="22" fill="#fff" stroke="#444"/><path d="M6 6h14M6 13h14" stroke="#1f77b4" stroke-width="2"/><path d="M6 9.500h10M6 17h10M4 5v14" stroke="#999"/></svg>
      <svg class="vi" viewBox="0 0 24 24"><rect x="1" y="3" width="22" height="18" fill="#fff" stroke="#444"/><path d="M4 15l4-7 4 7z" fill="#3aa655"/><path d="M13 7h8l-4 8z" fill="#d64550"/><path d="M3 18h18" stroke="#777"/></svg>
      <svg class="vi" viewBox="0 0 24 24"><path d="M1 1h22v11M11 23H1V1M1 5h22" fill="none" stroke="#444" stroke-width="1.200"/><path d="M5 9h4v3H5zM5 15h4v3H5z" fill="#aaa"/><path d="M12 12h11l-4 5v6l-3-2v-4z" fill="#fff" stroke="#444" stroke-width="1.300"/></svg>
      <svg class="vi" viewBox="0 0 24 24"><rect x="1" y="1" width="22" height="22" fill="#fff" stroke="#555"/><path d="M1 3h22" stroke="#555" stroke-width="3"/><path d="M1 10h22M1 16h22M8 5v18M16 5v18" stroke="#999"/></svg>
      <svg class="vi" viewBox="0 0 24 24"><rect x="1" y="1" width="22" height="22" fill="#fff" stroke="#555"/><path d="M1 3h22" stroke="#555" stroke-width="3"/><path d="M8 5h7v5H8zM16 5h7v18h-7zM1 11h7v6H1zM8 17h8v6H8zM1 17h7v6H1z" fill="#2f88c8"/><path d="M1 10h22M1 16h22M8 5v18M16 5v18" stroke="#fff"/></svg>
      <svg class="vi" viewBox="0 0 24 24"><text x="12" y="21" class="lang">R</text></svg>

      <svg class="vi" viewBox="0 0 24 24"><text x="12" y="19" class="lang py">Py</text></svg>
      <svg class="vi" viewBox="0 0 24 24"><path class="k" d="M1 0v23h23"/><path d="M1 6h14M1 13h10M1 18h8" stroke="#666"/><circle cx="19" cy="5" r="3.500" fill="#5ea9e5" stroke="#1f77b4"/><circle cx="13" cy="13" r="2" fill="#bbb" stroke="#666"/><circle cx="10" cy="18" r="2" fill="#bbb" stroke="#666"/></svg>
      <svg class="vi" viewBox="0 0 24 24"><path d="M9 12h6M13 4v16M13 4h3M13 12h3M13 20h3" fill="none" stroke="#444" stroke-width="1.200"/><path d="M1 9h8v6H1zM16 1h7v6h-7zM16 9h7v6h-7zM16 17h7v6h-7z" fill="#5ea9e5" stroke="#1f77b4"/></svg>
      <svg class="vi" viewBox="0 0 24 24"><path d="M1 2h22v16H11l-5 5v-5H1z" fill="#fff" stroke="#1f77b4" stroke-width="1.500"/></svg>
      <svg class="vi" viewBox="0 0 24 24"><path d="M4 1h11l6 6v16H4z" fill="#fff" stroke="#444" stroke-width="1.200"/><path d="M15 1v6h6" fill="none" stroke="#444"/><path d="M1 10h5v4H1zM9 12h9M9 16h6" stroke="#1f77b4" fill="none"/></svg>
      <svg class="vi" viewBox="0 0 24 24"><path d="M7 1h10v10a5 5 0 0 1-10 0z" fill="#fff" stroke="#333" stroke-width="1.300"/><path d="M7 1h10v3H7z" fill="#5ea9e5"/><path d="M7 3H2c0 6 2 9 6 10M17 3h5c0 6-2 9-6 10M12 16v4" fill="none" stroke="#333" stroke-width="1.300"/><path d="M6 20h12v3H6z" fill="#2f88c8"/></svg>

      <svg class="vi" viewBox="0 0 24 24"><path d="M3 1h12l6 6v16H3z" fill="#fff" stroke="#333" stroke-width="1.300"/><path d="M15 1v6h6" fill="none" stroke="#333"/><path d="M6 15h3v5H6zM11 12h3v8h-3zM16 9h3v11h-3z" fill="#444"/></svg>
      <svg class="vi" viewBox="0 0 24 24"><rect x="1" y="8" width="22" height="15" fill="#fff" stroke="#444"/><text x="14" y="20" class="n123">23</text><path d="M5 0h7l-4 6h4L3 17l2-8H1z" fill="#f8c03e" stroke="#c9620f"/></svg>
      <svg class="vi" viewBox="0 0 24 24"><path d="M4 14v8h9M13 3h9v9M4 12V8" fill="none" stroke="#888" stroke-width="1.200"/><path d="M12 13h11l-4 5v6l-3-2v-4z" fill="#fff" stroke="#444" stroke-width="1.200"/><path d="M5 0h7L8 6h4L3 17l2-8H1z" fill="#f8c03e" stroke="#c9620f"/></svg>
      <svg class="vi" viewBox="0 0 24 24"><rect x="1" y="2" width="22" height="21" fill="#cfe4f4" stroke="#1f77b4" stroke-width="1.300"/><path d="M10 2c2 5-4 6 0 10s4 7 3 11h5c-2-5-1-7 3-9V2z" fill="#5ea9e5"/><path d="M0 1h7v6l-3.500 5L0 7z" fill="#d97b1a"/><circle cx="19" cy="14" r="2" fill="#d97b1a"/><circle cx="18" cy="21" r="3" fill="#d97b1a"/></svg>
      <svg class="vi" viewBox="0 0 24 24"><path d="M12 1l6 6-6 5-6-5zM12 12l6 6-6 5-6-5zM6 7l5 5-5 5-5-5zM18 7l5 5-5 5-5-5z" fill="none" stroke="#9b3fa8" stroke-width="1.300"/></svg>
      <svg class="vi" viewBox="0 0 24 24"><path d="M1 3h14l8 9-8 9H1l8-9z" fill="none" stroke="#1f77b4" stroke-width="1.300"/><path d="M16 6L5 18" stroke="#5ea9e5" stroke-width="2.500"/></svg>
    </div>
    <div class="v-more">…</div>
    <div class="v-rule"></div>
    <div class="v-lbl">Values</div>
    <div class="drop d1">Add data fields here</div>
    <div class="v-lbl drill">Drill through</div>
    <div class="tgl-row cross"><span>Cross-report</span><div class="tgl off"><i></i>Off</div></div>
    <div class="tgl-row"><span>Keep all filters</span><div class="tgl on">On<i></i></div></div>
    <div class="drop d2">Add drill-through fields here</div>
  </aside>

  <aside class="data">
    <div class="v-head d-head"><span class="pane-title">Data</span><svg class="dbl" width="16" height="16"><use href="#dbl"/></svg></div>
    <div class="d-search">
      <svg width="18" height="18" viewBox="0 0 18 18"><circle cx="7.500" cy="7.500" r="6" fill="none" stroke="#444" stroke-width="1.200"/><path d="M12 12l5 5" stroke="#444" stroke-width="1.200"/></svg>
      <span>Search</span>
    </div>
    <div class="tree">
      <svg width="10" height="14" viewBox="0 0 10 14"><path d="M2 1l6 6-6 6" fill="none" stroke="#444"/></svg>
      <svg width="16" height="16" viewBox="0 0 16 16"><rect x="1" y="1.500" width="14" height="13" rx="2" fill="none" stroke="#333" stroke-width="1.200"/><path d="M1 5.500h14M1 10h14M5.500 1.500v13M10.500 1.500v13" stroke="#333"/></svg>
      <span>random_sales_data</span>
    </div>
  </aside>
</main>

<footer class="status">
  <span class="st-page">Page 4 of 7</span>
  <div class="st-zoom">
    <span class="z-minus"></span>
    <div class="z-track"><i class="z-thumb"></i><i class="z-tick"></i></div>
    <span class="z-plus"></span>
    <span class="z-val">73%</span>
    <svg width="20" height="18" viewBox="0 0 20 18"><rect x=".5" y=".5" width="19" height="17" fill="#dfe3e7" stroke="#7a8894"/><path d="M4 7V4h3M13 4h3v3M16 11v3h-3M7 14H4v-3" fill="none" stroke="#333"/></svg>
  </div>
</footer>
<div class="edge"></div>

<div class="taskbar">
  <div class="tk-center">
    <svg class="tk-win" width="30" height="30" viewBox="0 0 30 30"><path d="M1 2l13-1v13H1z" fill="#4cc2ff"/><path d="M16 1h13v13H16z" fill="#2fa8f0"/><path d="M1 16h13v13H1z" fill="#28a0ea"/><path d="M16 16h13v13H16z" fill="#0f7fd8"/></svg>
    <div class="tk-search">
      <svg width="20" height="22" viewBox="0 0 20 22"><circle cx="9" cy="9" r="7" fill="none" stroke="#222" stroke-width="2"/><path d="M14 14l5 6" stroke="#222" stroke-width="2"/></svg>
      <span>Search</span>
      <svg class="snork" width="50" height="30" viewBox="0 0 52 34"><rect x="2" y="10" width="18" height="13" rx="6" fill="#ef5a9c"/><rect x="6" y="13" width="10" height="7" rx="3" fill="#7ad3ee"/><path d="M22 2v26c0 4-8 4-9 1" fill="none" stroke="#e8386f" stroke-width="2.500"/><path d="M32 30L45 2l6 12-9 18c-4 2-8 1-10-2z" fill="#1f7fe0"/></svg>
    </div>
    <svg class="tk-i i-task" width="26" height="30" viewBox="0 0 26 30"><rect x="8" y="1" width="16" height="20" fill="#eee"/><rect x="1" y="9" width="16" height="21" fill="#222"/><rect x="8" y="9" width="9" height="12" fill="#bbb"/></svg>
    <svg class="tk-i i-cop" width="30" height="32" viewBox="0 0 40 44"><path d="M14 4h14c-7 2-8 9-8 17 0 6-2 13-8 17-6-1-9-7-9-16C3 13 7 6 14 4z" fill="url(#cop)"/><path d="M26 4c5 1 8 5 9 9H26l-6 8c0-8 1-15 6-17z" fill="#1d8fe0"/><path d="M37 13c1 10-3 24-12 26H13c7-2 9-8 9-16 0-5 2-10 8-10z" fill="url(#cop2)"/></svg>
    <svg class="tk-i i-teams" width="30" height="30" viewBox="0 0 30 30"><circle cx="22" cy="7" r="4" fill="#7b83eb"/><rect x="16" y="12" width="14" height="13" rx="5" fill="#7b83eb"/><circle cx="13" cy="6" r="5" fill="#5059c9"/><rect x="7" y="11" width="17" height="17" rx="4" fill="#7b83eb"/><rect x="1" y="8" width="16" height="16" rx="2" fill="#4b53bc"/><text x="9" y="21" class="tkT">T</text></svg>
    <svg class="tk-i i-edge" width="30" height="32" viewBox="0 0 30 32"><path d="M15 1c8 0 14 7 14 15H10c0 6 7 10 16 8-4 6-12 8-18 5C2 26-1 17 3 10 5 5 10 1 15 1z" fill="url(#edge)"/><path d="M10 16c0-4 4-6 8-5 2 1 3 3 3 5z" fill="#d8f3e3"/></svg>
    <svg class="tk-i i-store" width="30" height="34" viewBox="0 0 30 34"><path d="M9 7V3a6 3 0 0 1 12 0v4" fill="none" stroke="#39b8e8" stroke-width="2"/><path d="M1 7h28v23a3 3 0 0 1-3 3H4a3 3 0 0 1-3-3z" fill="#19518c"/><path d="M9 13h5v5H9z" fill="#f25022"/><path d="M16 13h5v5h-5z" fill="#7fba00"/><path d="M9 20h5v5H9z" fill="#00a4ef"/><path d="M16 20h5v5h-5z" fill="#ffb900"/></svg>
    <svg class="tk-i i-out" width="30" height="32" viewBox="0 0 30 32"><path d="M12 2h10l8 7v9L19 31h-7z" fill="#28a8ea"/><path d="M20 14h10v4L19 31h-7z" fill="#50d9ff"/><rect x="1" y="9" width="17" height="17" rx="2" fill="#0f6cbd"/><circle cx="9.500" cy="17.500" r="4.500" fill="none" stroke="#fff" stroke-width="2.200"/></svg>
    <svg class="tk-i i-drag" width="30" height="36" viewBox="0 0 30 36"><rect width="30" height="36" fill="url(#drag)"/><path d="M3 10c5-4 10-3 14 0l10 1-5 4c-3 0-3 3-1 6-4 0-7-1-9-5-3 0-6 0-9-2z" fill="#151515"/><path d="M4 20c5 1 10 5 12 11-5-2-10-5-12-11z" fill="#2a0c0e"/></svg>
    <svg class="tk-i i-files" width="32" height="34" viewBox="0 0 32 34"><path d="M1 2h12l3 4h-15z" fill="#e2a512"/><rect x="1" y="6" width="30" height="27" rx="2" fill="#ffd54f"/><rect x="8" y="22" width="16" height="8" rx="1" fill="#0f7fd8"/></svg>
    <svg class="tk-i i-chr" width="30" height="32"><use href="#chrome"/></svg>
    <div class="tk-i i-chr2">
      <svg width="30" height="32"><use href="#chrome"/></svg>
      <span class="pfp"></span>
      <span class="runner"></span>
    </div>
    <div class="tk-active">
      <svg width="22" height="36" viewBox="0 0 22 36"><rect x="1" y="20" width="9" height="15" fill="#f2c811"/><rect x="7" y="10" width="9" height="25" fill="#f5d558"/><rect x="13" y="1" width="9" height="34" fill="#d9a507"/></svg>
      <span class="act-bar"></span>
    </div>
  </div>
  <div class="tk-tray">
    <svg class="tr-caret" width="14" height="10" viewBox="0 0 14 10"><path d="M1 9l6-7 6 7" fill="none" stroke="#222" stroke-width="1.500"/></svg>
    <svg class="tr-cloud" width="24" height="24" viewBox="0 0 24 24"><path d="M5 17a5 5 0 0 1 0-9 6 6 0 0 1 11-1 5 5 0 0 1 3 8" fill="#555"/><circle cx="15" cy="16" r="5" fill="#fff" stroke="#1f77d0" stroke-width="1.500"/></svg>
    <div class="tr-lang">ENG<br>US</div>
    <svg class="tr-i" width="22" height="20" viewBox="0 0 22 20"><path d="M1 7c6-6 14-6 20 0" fill="none" stroke="#999" stroke-width="1.300"/><path d="M4 10c4-4 10-4 14 0M7 13c3-2 5-2 8 0" fill="none" stroke="#222" stroke-width="1.300"/><circle cx="11" cy="16.500" r="1.500" fill="#222"/></svg>
    <svg class="tr-i" width="22" height="22" viewBox="0 0 22 22"><path d="M1 8h4l5-5v16l-5-5H1z" fill="none" stroke="#222" stroke-width="1.200"/><path d="M13 7c2 2 2 6 0 8M16 4c3 4 3 10 0 14M19 2c4 5 4 13 0 18" fill="none" stroke="#222"/></svg>
    <svg class="tr-i" width="22" height="16" viewBox="0 0 22 16"><rect x="1" y="1" width="17" height="14" rx="2.500" fill="none" stroke="#222" stroke-width="1.300"/><rect x="3.500" y="3.500" width="10" height="9" fill="#222"/><rect x="19" y="5" width="2" height="6" fill="#222"/></svg>
    <div class="tr-time">17:49<br>06-08-2025</div>
  </div>
</div>
</body>
</html>
```
FILE: styles.css
```css
* { box-sizing: border-box; }
html, body { margin: 0; padding: 0; }
body {
  width: 1920px; height: 1080px; overflow: hidden;
  font-family: "Open Sans", "Noto Sans", "Liberation Sans", sans-serif;
  color: #252423; background: #fff;
  display: flex; flex-direction: column;
}
.defs { position: absolute; width: 0; height: 0; }

/* title bar */
.titlebar { height: 43px; flex: none; background: #3b3a39; display: flex; align-items: center; color: #fff; position: relative; }
.tb-left { width: 911px; display: flex; align-items: center; flex: none; padding-left: 20px; }
.tb-ic { margin-right: 18px; flex: none; }
.tb-redo { margin-right: 10px; }
.doc-title { font-size: 14.250px; white-space: nowrap; }
.doc-dot { width: 3px; height: 3px; background: #fff; margin: 0 7px; border-radius: 50%; }
.doc-caret { border: 5px solid transparent; border-top: 6px solid #fff; border-bottom: 0; margin-left: 9px; }
.tb-search { width: 500px; height: 30px; background: #d4d4d2; border-radius: 2px; display: flex; align-items: center; padding-left: 21px; gap: 12px; color: #3e5a52; font-size: 16px; flex: none; }
.tb-right { flex: 1; display: flex; align-items: center; padding-left: 242px; }
.signin { font-size: 14px; letter-spacing: -.1px; white-space: nowrap; width: 58px; }
.avatar { margin-right: 39px; flex: none; }
.win-btn { margin-right: 41px; flex: none; }

/* ribbon tabs */
.tabsrow { height: 43px; flex: none; background: #fafafa; display: flex; justify-content: space-between; align-items: flex-start; }
.rtabs { display: flex; height: 43px; position: relative; }
.rtab { font-size: 17px; letter-spacing: -.35px; line-height: 20px; padding-top: 10px; text-align: center; color: #252423; }
.t-file { width: 82px; }
.t-home { width: 86px; font-weight: 600; position: relative; }
.t-home::after { content: ""; position: absolute; left: 19px; right: 19px; top: 36px; height: 3px; background: #117865; }
.t-ins { width: 82px; }
.t-mod { width: 116px; }
.t-view { width: 74px; }
.t-opt { width: 112px; }
.t-help { width: 72px; }
.share { width: 105px; height: 30px; margin: 5px 7px 0 0; background: #117865; border: 0; border-radius: 4px; color: #fff; display: flex; align-items: center; padding: 0 0 0 8px; gap: 7px; font: 14px "Open Sans", sans-serif; letter-spacing: -.3px; }

/* ribbon */
.ribbon { height: 114px; flex: none; background: #fafafa; display: flex; position: relative; box-shadow: 0 2px 5px rgba(0,0,0,.2); z-index: 3; }
.rgroup { height: 110px; margin-top: 2px; border-right: 1px solid #ddd; display: flex; flex-direction: column; flex: none; }
.rbody { height: 92px; flex: none; display: grid; justify-content: start; }
.rlabel { height: 18px; font-size: 12px; letter-spacing: -.2px; line-height: 20px; text-align: center; color: #444; }
.rbtn { display: flex; flex-direction: column; align-items: center; min-width: 0; }
.ric { height: 46px; padding-top: 4px; display: flex; align-items: flex-start; justify-content: center; flex: none; }
.rtxt { font-size: 14px; letter-spacing: -.3px; line-height: 21px; margin-top: 2px; text-align: center; white-space: nowrap; color: #252423; }
.dis .rtxt { color: #c8c6c4; }
.chev { display: inline-block; width: 6px; height: 6px; border-right: 1.500px solid #444; border-bottom: 1.500px solid #444; transform: rotate(45deg) translate(-1px,-1px); margin-left: 5px; }
.dis .chev { border-color: #bbb; }
.chev.solo { margin-left: 0; }
.g-clip { width: 201px; }
.clipbody { display: flex; padding-left: 15px; }
.paste { width: 40px; }
.clipcol { padding: 4px 0 0 9px; display: flex; flex-direction: column; gap: 7.500px; }
.clipitem { height: 22px; display: flex; align-items: center; gap: 6px; font-size: 14px; letter-spacing: -.1px; color: #c8c6c4; white-space: nowrap; }
.g-data { width: 449px; }
.g-data .rbody { padding-left: 4px; grid-template-columns: 62px 58px 80px 38px 62px 60px 78px; }
.g-query { width: 145px; }
.g-query .rbody { padding-left: 5px; grid-template-columns: 80px 44px; }
.g-insert { width: 183px; }
.g-insert .rbody { padding-left: 11px; grid-template-columns: 46px 56px 56px; }
.g-calc { width: 233px; }
.g-calc .rbody { padding-left: 6px; grid-template-columns: 100px 50px 72px; }
.g-sens { width: 92px; }
.g-sens .rbody { justify-content: center; }
.g-share { width: 74px; }
.g-share .rbody { justify-content: center; }
.g-cop { width: 164px; }
.g-cop .rbody { padding-left: 8px; grid-template-columns: 92px 52px; }
.collapse { position: absolute; right: 7px; top: 101px; }

/* workspace */
.workspace { height: 790px; flex: none; display: flex; background: #f3f2f1; }
.rail { width: 52px; flex: none; background: #f3f2f1; border-right: 1px solid #e1dfdd; display: flex; flex-direction: column; align-items: center; padding-top: 3px; gap: 8px; position: relative; }
.rail-ic { width: 42px; height: 42px; display: flex; align-items: center; justify-content: center; flex: none; }
.rail-ic.col { flex-direction: column; height: 42px; color: #777; font-size: 8px; font-weight: 600; line-height: 9px; }
.rail-ic.on::before { content: ""; position: absolute; left: 0; top: 0; width: 3px; height: 50px; background: #117865; }
.center { width: 1416px; flex: none; display: flex; flex-direction: column; }
.stage { height: 746px; flex: none; display: flex; background: #fff; }
.canvas-wrap { flex: 1; }
.page { height: 657px; border-bottom: 2px dotted #333; position: relative; }
.visual { position: absolute; left: 16px; top: 72px; width: 713px; height: 439px; background: #fff; border: 1px solid #666; box-shadow: 5px 6px 7px rgba(0,0,0,.45); display: flex; flex-direction: column; }
.v-title { height: 22px; background: #e6e6e6; text-align: center; font-size: 14px; font-weight: 600; letter-spacing: -.1px; line-height: 20px; color: #333; flex: none; }
.legend { height: 27px; display: flex; align-items: center; padding-left: 4px; gap: 7px; font-size: 11.500px; letter-spacing: -.25px; color: #666; flex: none; }
.legend b { font-weight: 700; margin-right: 2px; }
.lg { display: flex; align-items: center; gap: 2px; white-space: nowrap; }
.lg i { width: 9px; height: 9px; border-radius: 50%; }
.treemap { margin-left: 3px; width: 703px; height: 383px; display: flex; gap: 1px; flex: none; }
.tm-col { display: flex; flex-direction: column; gap: 2px; }
.tm-row { display: flex; gap: 1px; }
.w1 { width: 197px; }
.w2 { width: 184px; }
.w3 { width: 320px; }
.h-milk { height: 137px; } .h-bread { height: 121px; } .h-jacket { flex: 1; }
.h-head { height: 129px; } .h-chair { height: 126px; } .h-laptop { flex: 1; }
.top { height: 199px; }
.bottom { flex: 1; min-height: 0; }
.w-phone { width: 111px; } .w-eggs { width: 105px; } .w-table { flex: 1; }
.w-jeans { width: 216px; } .w-shirt { flex: 1; }
.h-jeans { height: 91px; } .h-sofa { flex: 1; }
.cell { color: #fff; display: flex; flex-direction: column; justify-content: space-between; padding: 4px 4px 1px; font-size: 14px; letter-spacing: -.3px; line-height: 19px; min-height: 0; }
.cell small { font-size: 13px; letter-spacing: -.3px; line-height: 18px; }
.c-milk { background: #118dff; } .c-bread { background: #12239e; } .c-jacket { background: #e66c37; }
.c-head { background: #6b007b; } .c-chair { background: #e044a7; } .c-laptop { background: #744ec2; }
.c-phone { background: #d9b300; } .c-eggs { background: #d64550; } .c-table { background: #197278; }
.c-jeans { background: #1aab40; } .c-sofa { background: #15c6f4; } .c-shirt { background: #4092ff; }

.notes { position: absolute; left: 754px; top: 78px; width: 410px; color: #252423; }
.notes h1 { font-size: 28px; font-weight: 700; letter-spacing: -.2px; line-height: 40px; margin: 0 0 15px; color: #252423; }
.notes h2 { font-size: 23px; font-weight: 700; letter-spacing: -.05px; line-height: 30px; margin: 0; }
.notes ul { margin: 0; padding: 0; list-style: none; }
.notes li { font-size: 20.600px; line-height: 30px; padding-left: 16px; letter-spacing: 0; position: relative; }
.notes li::before { content: ""; position: absolute; left: 10px; top: 5px; width: 3px; height: 3px; background: #333; border-radius: 50%; }
.notes li b { font-weight: 700; letter-spacing: -.05px; }

/* filters */
.filters { width: 251px; flex: none; border-left: 1px solid #b3b0ad; padding-left: 1px; background: #fff; position: relative; }
.f-head { height: 50px; display: flex; align-items: center; padding: 0 15px 0 12px; }
.pane-title { font-size: 19px; font-weight: 600; letter-spacing: -.3px; white-space: nowrap; }
.f-head .pane-title { margin-left: 8px; }
.eye { margin-left: auto; margin-right: 20px; }
.f-search { margin: 7px 16px 0 9px; height: 42px; border: 1px solid #b3b0ad; border-radius: 2px; display: flex; align-items: center; padding-left: 12px; gap: 12px; font-size: 15px; letter-spacing: -.2px; color: #444; }
.f-rule { height: 1px; background: #bbb; margin-top: 5px; }
.f-sec { margin: 21px 10px 0 9px; height: 22px; display: flex; justify-content: space-between; font-size: 14px; letter-spacing: 0; line-height: 20px; color: #333; }
.f-sec em { font-style: normal; color: #555; font-size: 16px; padding-right: 7px; }
.f-sec.s2 { margin-top: 34px; }
.f-box { margin: 9px 11px 0 9px; height: 56px; border: 1px solid #c8c6c4; border-radius: 2px; display: flex; align-items: center; justify-content: center; font-size: 14px; letter-spacing: 0; }
.f-box + .f-sec.s2 { margin-top: 34px; }

/* page bar */
.pagebar { height: 44px; flex: none; background: #f3f2f1; display: flex; }
.devices { width: 159px; height: 44px; display: flex; align-items: center; flex: none; position: relative; }
.dev { width: 55px; height: 44px; display: flex; align-items: center; justify-content: center; position: relative; padding-bottom: 10px; flex: none; }
.dev.on::after { content: ""; position: absolute; left: 12px; width: 30px; height: 3px; top: 35px; background: #117865; }
.dev.on { width: 54px; }
.arr { width: 0; height: 0; border: 5px solid transparent; margin-bottom: 4px; flex: none; }
.arr.l { border-right: 6px solid #c8c6c4; border-left: 0; margin-left: 6px; }
.arr.r { border-left: 6px solid #c8c6c4; border-right: 0; margin-left: 23px; }
.ptab { width: 95.500px; height: 44px; background: #fff; border-left: 1px solid #c8c6c4; display: flex; align-items: center; justify-content: center; font-size: 14px; letter-spacing: -.3px; position: relative; flex: none; }
.ptab.cur { font-weight: 600; border-bottom: 5px solid #117865; padding-top: 4px; }
.px { position: absolute; right: 4px; top: 1px; font-size: 12px; font-weight: 600; line-height: 12px; }
.padd { width: 49px; height: 44px; background: #117865; color: #fff; font-size: 26px; font-weight: 700; line-height: 40px; text-align: center; flex: none; }

/* visualizations */
.viz { width: 227px; flex: none; background: #f3f2f1; border-left: 1px solid #e1dfdd; border-right: 1px solid #e1dfdd; padding-left: 1px; position: relative; }
.v-head { height: 50px; display: flex; align-items: center; justify-content: space-between; padding: 0 9px 0 9px; }
.v-sub { font-size: 14px; font-weight: 600; letter-spacing: -.2px; padding-left: 9px; line-height: 20px; margin-top: -3px; }
.v-modes { display: flex; padding-left: 9px; gap: 40px; margin-top: 5px; height: 40px; }
.mode { width: 40px; height: 40px; display: flex; align-items: center; justify-content: center; }
.mode.sel { background: #d2d0ce; border-radius: 2px; }
.v-notch { height: 15px; border-bottom: 1px solid #a19f9d; position: relative; }
.v-notch::after { content: ""; position: absolute; left: 23px; top: 7px; width: 14px; height: 14px; background: #f3f2f1; border-left: 1px solid #a19f9d; border-top: 1px solid #a19f9d; transform: rotate(45deg); }
.v-grid { display: grid; grid-template-columns: repeat(6, 35px); grid-auto-rows: 35px; padding: 9px 0 0 11px; position: relative; }
.vi { width: 23px; height: 23px; margin: 6px 0 0 2px; overflow: visible; }
.k { fill: none; stroke: #444; stroke-width: 1.300; }
.b { fill: #6db3ea; stroke: #1f77b4; }
.g { fill: #c8c6c4; stroke: #666; }
.n { fill: #fff; stroke: #555; }
.bl { fill: none; stroke: #2f88c8; stroke-width: 1.300; }
.xl { font: 700 14px "Open Sans", sans-serif; fill: #fff; text-anchor: middle; }
.tbA { font: 400 22px "Open Sans", sans-serif; fill: #2f88c8; text-anchor: middle; }
.fx { font: italic 400 17px "Liberation Serif", serif; fill: #bbb; text-anchor: middle; }
.n123 { font: 400 10px "Open Sans", sans-serif; fill: #2f88c8; text-anchor: middle; }
.lang { font: 700 22px "Open Sans", sans-serif; fill: #1f77b4; text-anchor: middle; }
.lang.py { font-size: 22px; letter-spacing: -1px; }
.tkT { font: 700 12px "Open Sans", sans-serif; fill: #fff; text-anchor: middle; }
.v-more { font-size: 20px; line-height: 16px; padding-left: 15px; color: #333; margin-top: 2px; }
.v-rule { height: 1px; background: #e1dfdd; margin-top: 20px; }
.v-lbl { font-size: 14px; letter-spacing: -.2px; line-height: 20px; padding-left: 14px; margin-top: 12px; color: #333; }
.drill { font-weight: 600; color: #555; margin-top: 15px; }
.drop { margin: 7px 7px 0 5px; background: #fff; border: 1px dashed #c8c6c4; font-size: 14px; letter-spacing: 0; display: flex; align-items: center; white-space: nowrap; color: #252423; }
.d1 { height: 34px; padding-left: 12px; }
.d2 { height: 31px; padding-left: 9px; margin-top: 8px; letter-spacing: .05px; }
.tgl-row { height: 34px; padding: 0 27px 0 14px; display: flex; align-items: center; justify-content: space-between; font-size: 14px; letter-spacing: -.1px; color: #333; }
.tgl-row.cross { margin-top: 3px; }
.tgl { width: 40px; height: 20px; border-radius: 10px; font-size: 10px; display: flex; align-items: center; justify-content: center; gap: 2px; }
.tgl i { width: 10px; height: 10px; border-radius: 50%; }
.tgl.off { border: 1px solid #888; background: #fff; color: #666; }
.tgl.off i { background: #605e5c; }
.tgl.on { background: #117865; color: #fff; }
.tgl.on i { background: #fff; }

/* data */
.data { flex: 1; background: #f3f2f1; }
.d-head { padding: 0 10px 0 10px; }
.d-search { margin: 8px 6px 0 6px; height: 29px; background: #fff; border: 1px solid #c8c6c4; border-bottom-color: #666; border-radius: 4px; display: flex; align-items: center; padding-left: 14px; gap: 9px; font-size: 16px; color: #555; letter-spacing: -.2px; }
.tree { display: flex; align-items: center; gap: 7px; margin: 16px 0 0 19px; font-size: 14px; letter-spacing: -.15px; color: #333; height: 20px; }

/* status */
.status { height: 29px; flex: none; background: #f3f2f1; border-top: 2px solid #e1dfdd; display: flex; align-items: center; justify-content: space-between; padding: 0 21px 0 5px; font-size: 14px; letter-spacing: -.3px; color: #605e5c; }
.st-zoom { display: flex; align-items: center; }
.z-minus { width: 5px; height: 2px; background: #555; margin-right: 6px; }
.z-track { width: 125px; height: 1px; background: #666; position: relative; }
.z-thumb { position: absolute; left: 43px; top: -7px; width: 4px; height: 15px; background: #605e5c; }
.z-tick { position: absolute; left: 62px; top: -4px; width: 1px; height: 9px; background: #777; }
.z-plus { width: 10px; height: 10px; margin: 0 18px 0 6px; background: linear-gradient(#555,#555) center/10px 2px no-repeat, linear-gradient(#555,#555) center/2px 10px no-repeat; }
.z-val { width: 45px; margin-right: 8px; color: #666; }
.edge { height: 2px; flex: none; background: linear-gradient(90deg, #111 944px, #bdbdbd 944px); }

/* taskbar */
.taskbar { flex: 1; min-height: 0; background: linear-gradient(90deg, #f4e2d4, #f6e3d5 50%, #f4e0d0); display: flex; position: relative; }
.tk-center { display: flex; align-items: center; padding-left: 502px; width: 1440px; flex: none; }
.tk-win { flex: none; }
.tk-search { width: 273px; height: 39px; margin-left: 17px; background: #fbf3ec; border: 1px solid #e5d5c9; border-radius: 20px; display: flex; align-items: center; padding-left: 12px; gap: 12px; font-size: 16px; color: #555; position: relative; flex: none; }
.snork { position: absolute; right: 9px; top: 4px; }
.tk-i { flex: none; position: relative; }
.i-task { margin-left: 22px; }
.i-cop { margin-left: 23px; }
.i-teams { margin-left: 25px; }
.i-edge { margin-left: 26px; }
.i-store { margin-left: 24px; }
.i-out { margin-left: 25px; }
.i-drag { margin-left: 26px; }
.i-files { margin-left: 25px; }
.i-chr { margin-left: 23px; }
.i-chr2 { margin-left: 25px; width: 30px; height: 32px; }
.pfp { position: absolute; left: 15px; top: -7px; width: 20px; height: 33px; border-radius: 50%; background: #7a6553; border: 1px solid #ddd; }
.runner { position: absolute; left: 13px; top: 37px; width: 7px; height: 7px; border-radius: 50%; background: #777; }
.tk-active { margin-left: 15px; width: 48px; height: 54px; background: #faf1e9; border-radius: 5px; display: flex; justify-content: center; padding-top: 9px; position: relative; flex: none; }
.act-bar { position: absolute; left: 14px; bottom: 2px; width: 20px; height: 4px; border-radius: 2px; background: #0a74d6; }
.tk-tray { flex: 1; display: flex; align-items: center; font-size: 14px; color: #222; position: relative; }
.tr-caret { margin-left: 146px; }
.tr-cloud { margin-left: 21px; }
.tr-lang { width: 40px; margin: 0 8px 0 16px; text-align: center; line-height: 20px; letter-spacing: -.2px; }
.tr-i { margin-left: 8px; }
.tr-time { margin-left: auto; margin-right: 22px; text-align: right; line-height: 20px; letter-spacing: .55px; white-space: nowrap; }
```
